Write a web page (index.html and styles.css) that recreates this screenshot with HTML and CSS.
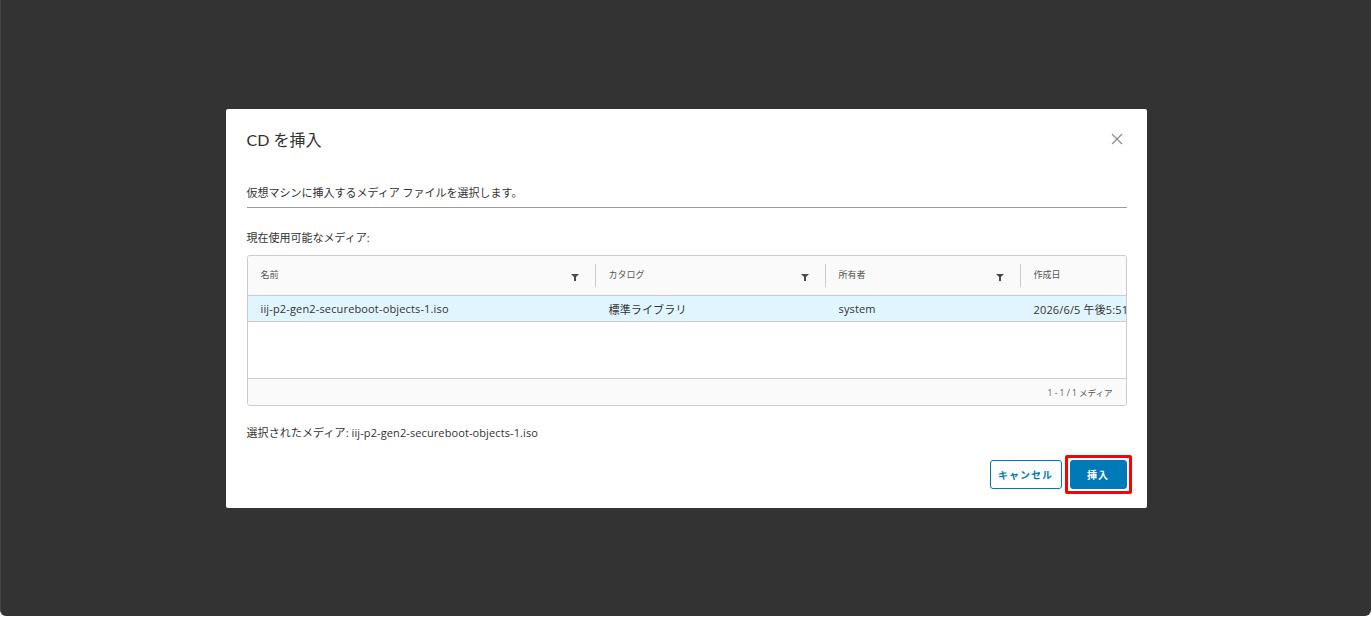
FILE: index.html
```html
<!DOCTYPE html>
<html lang="ja">
<head>
    <meta charset="UTF-8">
    <meta name="viewport" content="width=device-width, initial-scale=1.0">
    <title>CD を挿入</title>
    <link rel="stylesheet" href="styles.css">
</head>
<body>
    <div class="screen">
        <section class="modal">
            <header class="modal-header">
                <h3 class="modal-title">CD を挿入</h3>
                <button class="close" aria-label="閉じる">
                    <svg width="12" height="12" viewBox="0 0 12 12"><path d="M1 1 L11 11 M11 1 L1 11" stroke="#8c8c8c" stroke-width="1.2" fill="none"/></svg>
                </button>
            </header>

            <p class="description">仮想マシンに挿入するメディア ファイルを選択します。</p>

            <p class="label">現在使用可能なメディア:</p>

            <div class="datagrid">
                <div class="grid-head">
                    <div class="cell col-name">名前<span class="filter"></span></div>
                    <div class="cell col-catalog">カタログ<span class="filter"></span></div>
                    <div class="cell col-owner">所有者<span class="filter"></span></div>
                    <div class="cell col-date">作成日</div>
                </div>
                <div class="grid-row selected">
                    <div class="cell col-name">iij-p2-gen2-secureboot-objects-1.iso</div>
                    <div class="cell col-catalog">標準ライブラリ</div>
                    <div class="cell col-owner">system</div>
                    <div class="cell col-date">2026/6/5 午後5:51</div>
                </div>
                <div class="grid-empty"></div>
                <div class="grid-foot">1 - 1 / 1 メディア</div>
            </div>

            <p class="selected-media">選択されたメディア: iij-p2-gen2-secureboot-objects-1.iso</p>

            <footer class="modal-footer">
                <button class="btn btn-outline">キャンセル</button>
                <span class="highlight"><button class="btn btn-primary">挿入</button></span>
            </footer>
        </section>
    </div>
</body>
</html>
```

FILE: styles.css
```css
* {
    margin: 0;
    padding: 0;
    box-sizing: border-box;
}
:root {
    --primary-color: #0079b8;
    --text-color: #333;
    --muted-color: #565656;
    --border-color: #ccc;
    --grid-bg: #fafafa;
    --selected-bg: #e1f5fe;
}
body {
    font-family: "Open Sans", "Noto Sans CJK JP", sans-serif;
    background: #fff;
    color: var(--text-color);
    width: 1371px;
    height: 622px;
    overflow: hidden;
}
.screen {
    height: 616px;
    background-color: #333;
    border-left: 1px solid #444;
    border-radius: 0 0 6px 6px;
    display: flex;
    align-items: center;
    justify-content: center;
    padding-top: 1px;
}
.modal {
    width: 921px;
    height: 399px;
    background: #fff;
    border-radius: 2px;
    padding: 18px 20px 0 21px;
    display: flex;
    flex-direction: column;
}
.modal-header {
    display: flex;
    align-items: center;
    justify-content: space-between;
    height: 24px;
}
.modal-title {
    font-family: Lato, "Noto Sans CJK JP", sans-serif;
    font-size: 16px;
    font-weight: 400;
    color: #313131;
}
.close {
    background: none;
    border: none;
    width: 12px;
    height: 12px;
    margin-right: 4px;
    display: flex;
}
.description {
    margin-top: 33px;
    font-size: 11px;
    line-height: 18px;
    padding-bottom: 5px;
    border-bottom: 1px solid #9a9a9a;
    color: #333;
}
.label {
    margin-top: 21px;
    font-size: 11px;
    line-height: 18px;
}
.datagrid {
    margin-top: 8px;
    border: 1px solid var(--border-color);
    border-radius: 3px;
    height: 151px;
    display: flex;
    flex-direction: column;
    overflow: hidden;
    font-size: 11px;
}
.grid-head, .grid-row {
    display: flex;
    white-space: nowrap;
}
.grid-head {
    height: 40px;
    background: var(--grid-bg);
    border-bottom: 1px solid var(--border-color);
    font-size: 9px;
    color: var(--muted-color);
}
.grid-head .cell {
    position: relative;
    display: flex;
    align-items: center;
    justify-content: space-between;
    padding: 0 17px 2px 13px;
}
.grid-head .cell + .cell::before {
    content: "";
    position: absolute;
    left: -1px;
    top: 8px;
    bottom: 8px;
    width: 1px;
    background: var(--border-color);
}
.filter {
    width: 0;
    height: 0;
    border-left: 4px solid transparent;
    border-right: 4px solid transparent;
    border-top: 4px solid #4a4a4a;
    position: relative;
    top: 1px;
}
.filter::after {
    content: "";
    position: absolute;
    left: -1px;
    top: -1px;
    width: 2px;
    height: 4px;
    background: #4a4a4a;
}
.grid-row {
    height: 26px;
    align-items: center;
    border-bottom: 1px solid var(--border-color);
    letter-spacing: 0.15px;
}
.grid-row .cell {
    padding: 0 13px;
    overflow: hidden;
}
.grid-row.selected {
    background: var(--selected-bg);
}
.col-name { width: 348px; flex: none; }
.col-catalog { width: 230px; flex: none; }
.col-owner { width: 195px; flex: none; }
.col-date { flex: 1; }
.grid-empty {
    flex: 1;
}
.grid-foot {
    height: 27px;
    border-top: 1px solid var(--border-color);
    background: var(--grid-bg);
    display: flex;
    align-items: center;
    justify-content: flex-end;
    padding-right: 13px;
    font-size: 8.5px;
    color: var(--muted-color);
}
.selected-media {
    margin-top: 18px;
    font-size: 11px;
    line-height: 18px;
    letter-spacing: 0.1px;
}
.modal-footer {
    margin-top: 13px;
    display: flex;
    justify-content: flex-end;
    align-items: center;
    gap: 3px;
}
.btn {
    height: 29px;
    border-radius: 3px;
    font-family: inherit;
    font-size: 10px;
    font-weight: 700;
    letter-spacing: 1px;
    cursor: pointer;
}
.btn-outline {
    width: 72px;
    background: #fff;
    border: 1px solid var(--primary-color);
    color: var(--primary-color);
}
.highlight {
    display: flex;
    border: 3px solid #f00;
    border-radius: 2px;
    padding: 2px;
    margin-right: -5px;
}
.btn-primary {
    width: 57px;
    background: var(--primary-color);
    border: 1px solid var(--primary-color);
    color: #fff;
}
```
